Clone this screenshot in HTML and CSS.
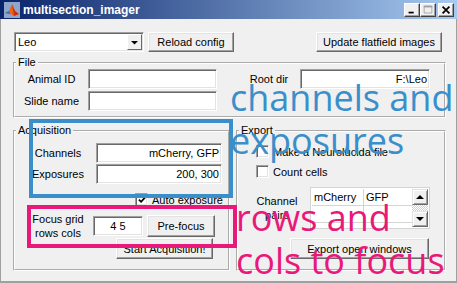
FILE: index.html
```html
<!DOCTYPE html>
<html lang="en">

<head>
  <meta charset="UTF-8">
  <title>multisection_imager</title>
  <link rel="stylesheet" href="styles.css">
</head>

<body>
  <div class="window">
    <!-- Title bar -->
    <div class="titlebar">
      <svg class="app-icon" viewBox="0 0 16 16">
        <rect x="0" y="0" width="16" height="16" fill="#8fa6cc" />
        <polygon points="1,11 5,9 8,2 11,9 15,12 10,14 6,12" fill="#e8641c" />
        <polygon points="8,2 11,9 15,12 10,14" fill="#c9301a" />
        <polygon points="1,11 5,9 6,12" fill="#3c6fb4" />
      </svg>
      <span class="title">multisection_imager</span>
      <div class="caption-buttons">
        <span class="cap-btn">
          <svg viewBox="0 0 16 14"><rect x="4" y="9" width="6" height="2" fill="#000" /></svg>
        </span>
        <span class="cap-btn">
          <svg viewBox="0 0 16 14"><path d="M3.5 2.5h9v8h-9z" fill="none" stroke="#a0a0a0" /><rect x="3" y="2" width="10" height="2" fill="#a0a0a0" /></svg>
        </span>
        <span class="cap-btn close">
          <svg viewBox="0 0 16 14"><path d="M4 3l8 8M12 3l-8 8" stroke="#000" stroke-width="2" /></svg>
        </span>
      </div>
    </div>

    <div class="client">
      <div class="toolbar">
        <div class="popup">
          <span>Leo</span>
          <span class="popup-arrow">
            <svg viewBox="0 0 11 14"><polygon points="2,6 9,6 5.5,9.5" fill="#000" /></svg>
          </span>
        </div>
        <button class="btn reload">Reload config</button>
        <button class="btn update">Update flatfield images</button>
      </div>

      <!-- File -->
      <fieldset class="panel file-panel">
        <legend>File</legend>
        <div class="file-row">
          <span class="file-label">Animal ID</span>
          <input class="edit file-edit" type="text" value="">
          <span class="root-label">Root dir</span>
          <input class="edit root-edit" type="text" value="F:\Leo">
        </div>
        <div class="file-row second">
          <span class="file-label">Slide name</span>
          <input class="edit file-edit" type="text" value="">
        </div>
      </fieldset>

      <div class="lower">
        <!-- Acquisition -->
        <fieldset class="panel acq-panel">
          <legend>Acquisition</legend>
          <div class="acq-row first">
            <span class="acq-label">Channels</span>
            <input class="edit acq-edit" type="text" value="mCherry, GFP">
          </div>
          <div class="acq-row">
            <span class="acq-label">Exposures</span>
            <input class="edit acq-edit" type="text" value="200, 300">
          </div>
          <div class="check-row auto">
            <span class="check">
              <svg viewBox="0 0 9 9"><path d="M1 4l2.5 2.5L8 1.5" fill="none" stroke="#000" stroke-width="2" /></svg>
            </span>
            <span>Auto exposure</span>
          </div>
          <div class="focus-row">
            <span class="focus-label">Focus grid<br>rows cols</span>
            <input class="edit focus-edit" type="text" value="4 5">
            <button class="btn prefocus">Pre-focus</button>
          </div>
          <button class="btn start">Start Acquisition!</button>
        </fieldset>

        <!-- Export -->
        <fieldset class="panel export-panel">
          <legend>Export</legend>
          <div class="check-row neuro">
            <span class="check"></span>
            <span>Make a Neurolucida file</span>
          </div>
          <div class="check-row count">
            <span class="check"></span>
            <span>Count cells</span>
          </div>
          <div class="pairs-row">
            <span class="pairs-label">Channel<br>pairs</span>
            <div class="table">
              <div class="cells">
                <span class="cell">mCherry</span>
                <span class="cell">GFP</span>
                <span class="cell"></span>
                <span class="cell"></span>
                <span class="cell"></span>
                <span class="cell"></span>
              </div>
              <div class="scrollbar">
                <span class="scroll-btn">
                  <svg viewBox="0 0 14 14"><polygon points="3,9 11,9 7,5" fill="#000" /></svg>
                </span>
                <span class="scroll-track"></span>
                <span class="scroll-btn">
                  <svg viewBox="0 0 14 14"><polygon points="3,5 11,5 7,9" fill="#000" /></svg>
                </span>
              </div>
            </div>
          </div>
          <button class="btn export">Export open windows</button>
        </fieldset>
      </div>
    </div>

    <!-- annotations drawn over the window -->
    <div class="mark mark-blue"></div>
    <div class="note note-blue">channels and<br>exposures</div>
    <div class="mark mark-pink"></div>
    <div class="note note-pink">rows and<br>cols to focus</div>
  </div>
</body>

</html>
```

FILE: styles.css
```css
* {
  box-sizing: border-box;
}

body {
  margin: 0;
  background: #f0f0f0;
  font-family: 'Liberation Sans', Arial, sans-serif;
  font-size: 11px;
  color: #000;
}

.window {
  position: relative;
  width: 457px;
  height: 283px;
  overflow: hidden;
  background: #f0f0f0;
  box-shadow: inset 1px 0 #a0a0a0, inset -1px 0 #a0a0a0, inset 0 -2px #a0a0a0;
}

/* title bar */
.titlebar {
  height: 19px;
  display: flex;
  align-items: center;
  padding-left: 4px;
  background: linear-gradient(to right, #0a246a, #a6caf0);
}

.app-icon {
  width: 16px;
  height: 16px;
}

.title {
  margin-left: 3px;
  color: #fff;
  font-weight: bold;
  font-size: 12px;
}

.caption-buttons {
  display: flex;
  margin-left: auto;
  margin-right: 3px;
}

.cap-btn {
  width: 16px;
  height: 14px;
  background: #f0f0f0;
  border: 1px solid;
  border-color: #fff #404040 #404040 #fff;
  box-shadow: inset -1px -1px #a0a0a0;
  display: flex;
}

.cap-btn svg {
  width: 14px;
  height: 12px;
}

.cap-btn.close {
  margin-left: 2px;
}

/* common controls */
.btn {
  font-family: inherit;
  font-size: 11px;
  color: #000;
  padding: 0;
  height: 20px;
  background: #f0f0f0;
  border: 1px solid;
  border-color: #fff #696969 #696969 #fff;
  box-shadow: inset -1px -1px #a0a0a0, inset 1px 1px #e3e3e3;
}

.edit {
  font-family: inherit;
  font-size: 11px;
  color: #000;
  height: 20px;
  padding: 0 2px;
  margin: 0;
  background: #fff;
  border: 1px solid;
  border-color: #a0a0a0 #fff #fff #a0a0a0;
  box-shadow: inset 1px 1px #696969, inset -1px -1px #e3e3e3;
  text-align: right;
}

.check {
  width: 13px;
  height: 13px;
  background: #fff;
  border: 1px solid;
  border-color: #a0a0a0 #fff #fff #a0a0a0;
  box-shadow: inset 1px 1px #696969, inset -1px -1px #e3e3e3;
  display: flex;
  align-items: center;
  justify-content: center;
}

.check svg {
  width: 8px;
  height: 8px;
}

.check-row {
  display: flex;
  align-items: center;
  gap: 4px;
  height: 13px;
}

/* toolbar row */
.toolbar {
  display: flex;
  align-items: center;
  margin-top: 13px;
  padding: 0 15px 0 14px;
}

.popup {
  width: 130px;
  height: 20px;
  display: flex;
  align-items: center;
  padding-left: 3px;
  background: #fff;
  border: 1px solid;
  border-color: #a0a0a0 #fff #fff #a0a0a0;
  box-shadow: inset 1px 1px #696969, inset -1px -1px #e3e3e3;
}

.popup-arrow {
  margin-left: auto;
  margin-right: 1px;
  width: 15px;
  height: 16px;
  background: #f0f0f0;
  border: 1px solid;
  border-color: #fff #696969 #696969 #fff;
  display: flex;
  justify-content: center;
  align-items: center;
}

.popup-arrow svg {
  width: 11px;
  height: 14px;
}

.reload {
  width: 86px;
  margin-left: 4px;
}

.update {
  width: 126px;
  margin-left: auto;
}

/* panels */
.panel {
  margin: 0;
  padding: 0;
  min-width: 0;
  border: 2px groove #fff;
}

.panel legend {
  padding: 0 2px;
  margin-left: 1px;
  line-height: 13px;
}

.file-panel {
  margin: 4px 0 0 13px;
  width: 433px;
  padding-bottom: 5px;
}

.file-row {
  display: flex;
  align-items: center;
}

.file-row.second {
  margin-top: 2px;
}

.file-label {
  width: 73px;
  text-align: center;
}

.file-edit {
  width: 129px;
}

.root-label {
  width: 54px;
  margin-left: 25px;
  text-align: center;
}

.root-edit {
  width: 130px;
  margin-left: 4px;
}

.lower {
  display: flex;
  margin: 6px 0 0 13px;
}

.acq-panel {
  width: 217px;
  height: 147px;
}

.export-panel {
  width: 210px;
  height: 147px;
  margin-left: 6px;
}

/* acquisition */
.acq-row {
  display: flex;
  align-items: center;
  margin: 1px 0 0 3px;
}

.acq-row.first {
  margin-top: 6px;
}

.acq-label {
  width: 80px;
  text-align: center;
}

.acq-edit {
  width: 126px;
  margin-left: -2px;
}

.check-row.auto {
  margin: 9px 0 0 120px;
}

.focus-row {
  display: flex;
  align-items: center;
  margin: 6px 0 0 8px;
}

.focus-label {
  width: 70px;
  line-height: 14px;
  text-align: center;
}

.focus-edit {
  width: 50px;
  text-align: center;
}

.prefocus {
  width: 68px;
  height: 22px;
  margin-left: 4px;
}

.start {
  display: block;
  width: 97px;
  height: 21px;
  margin: -2px 0 0 101px;
}

/* export */
.check-row.neuro {
  margin: 8px 0 0 18px;
}

.check-row.count {
  margin: 7px 0 0 18px;
}

.pairs-row {
  display: flex;
  align-items: center;
  margin-top: 9px;
}

.pairs-label {
  width: 70px;
  margin-left: 4px;
  line-height: 14px;
  text-align: center;
}

.table {
  display: flex;
  width: 120px;
  height: 42px;
  margin-left: -2px;
  padding: 1px;
  background: #fff;
  border: 1px solid #d4d4d4;
}

.cells {
  display: grid;
  grid-template-columns: 52px 50px;
  grid-auto-rows: 17px;
  overflow: hidden;
}

.cell {
  padding-left: 2px;
  line-height: 16px;
  border-right: 1px solid #d4d4d4;
  border-bottom: 1px solid #d4d4d4;
}

.scrollbar {
  display: flex;
  flex-direction: column;
  width: 16px;
}

.scroll-btn {
  width: 16px;
  height: 16px;
  background: #f0f0f0;
  border: 1px solid;
  border-color: #e3e3e3 #696969 #696969 #e3e3e3;
  box-shadow: inset 1px 1px #fff, inset -1px -1px #a0a0a0;
  display: flex;
  align-items: center;
  justify-content: center;
}

.scroll-btn svg {
  width: 14px;
  height: 14px;
}

.scroll-track {
  flex: 1;
  background: repeating-conic-gradient(#fff 0 25%, #d4d0c8 0 50%) 0 0 / 2px 2px;
}

.export {
  display: block;
  width: 139px;
  height: 21px;
  margin: 9px 0 0 52px;
}

/* annotations */
.mark {
  position: absolute;
  border: 4px solid;
}

.mark-blue {
  left: 29px;
  top: 119px;
  width: 204px;
  height: 79px;
  border-color: #3a8fcb;
}

.mark-pink {
  left: 27px;
  top: 205px;
  width: 210px;
  height: 43px;
  border-color: #e8197b;
}

.note {
  position: absolute;
  font-family: 'Open Sans', sans-serif;
  font-size: 36px;
  line-height: 43px;
  white-space: nowrap;
}

.note-blue {
  left: 230px;
  top: 76px;
  color: #3a8fcb;
}

.note-pink {
  left: 236px;
  top: 196px;
  color: #e8197b;
}
```
